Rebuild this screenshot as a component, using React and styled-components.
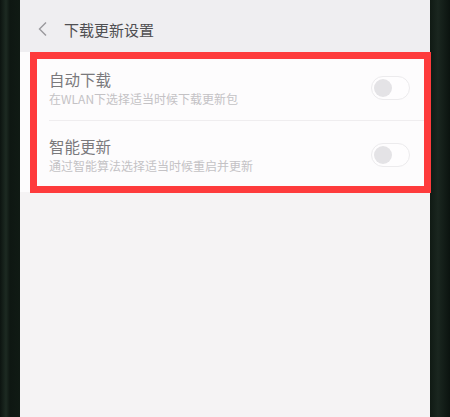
import styled, { createGlobalStyle } from "styled-components";

const Global = createGlobalStyle`
  html, body {
    margin: 0;
    padding: 0;
    background: #0f1813;
    font-family: "Noto Sans CJK SC", "Noto Sans", sans-serif;
  }
`;

const Phone = styled.div`
  width: 450px;
  height: 417px;
  display: flex;
  overflow: hidden;
  background: linear-gradient(
    90deg,
    #0c1410 0px,
    #1d2a22 6px,
    #0e1712 10px,
    #101a14 20px,
    #101a14 430px,
    #1a261f 438px,
    #0b130f 450px
  );
`;

const Screen = styled.div`
  position: relative;
  margin-left: 20px;
  width: 410px;
  height: 100%;
  background: #f5f3f4;
  display: flex;
  flex-direction: column;
`;

const Header = styled.div`
  height: 52px;
  display: flex;
  align-items: center;
  gap: 15px;
  padding-left: 17px;
  padding-top: 6px;
  box-sizing: border-box;
  background: #efeef1;
`;

const Title = styled.div`
  font-size: 15px;
  color: #4f4f52;
`;

const Card = styled.div`
  background: #fdfcfd;
  padding-left: 29px;
`;

const Row = styled.div`
  display: flex;
  align-items: center;
  padding: ${(p) => (p.$last ? "16px 20px 19px 0" : "18px 20px 14px 0")};
  border-bottom: ${(p) => (p.$last ? "none" : "1px solid #efedef")};
`;

const Texts = styled.div`
  flex: 1;
  display: flex;
  flex-direction: column;
  gap: 3px;
`;

const RowTitle = styled.div`
  font-size: 15.5px;
  line-height: 19px;
  color: #7a797c;
`;

const RowSub = styled.div`
  font-size: 12px;
  line-height: 14px;
  color: #c4c2c5;
`;

const Toggle = styled.div`
  width: 39px;
  height: 24px;
  box-sizing: border-box;
  border: 1px solid #ecebed;
  border-radius: 12px;
  background: #fefdfe;
  display: flex;
  align-items: center;
  padding-left: 2px;
`;

const Knob = styled.div`
  width: 18px;
  height: 18px;
  border-radius: 50%;
  background: #e4e3e6;
`;

const Highlight = styled.div`
  position: absolute;
  left: 10px;
  top: 52px;
  width: 401px;
  height: 141px;
  box-sizing: border-box;
  border: 7px solid #fe3b3c;
  pointer-events: none;
`;

const Back = () => (
  <svg width="12" height="16" viewBox="0 0 12 16">
    <path d="M9 1.5 L2.5 8 L9 14.5" fill="none" stroke="#9a999d" strokeWidth="1.4" />
  </svg>
);

const items = [
  { title: "自动下载", sub: "在WLAN下选择适当时候下载更新包" },
  { title: "智能更新", sub: "通过智能算法选择适当时候重启并更新" },
];

export default function App() {
  return (
    <>
      <Global />
      <Phone>
        <Screen>
          <Header>
            <Back />
            <Title>下载更新设置</Title>
          </Header>
          <Card>
            {items.map((it, i) => (
              <Row key={it.title} $last={i === items.length - 1}>
                <Texts>
                  <RowTitle>{it.title}</RowTitle>
                  <RowSub>{it.sub}</RowSub>
                </Texts>
                <Toggle>
                  <Knob />
                </Toggle>
              </Row>
            ))}
          </Card>
          <Highlight />
        </Screen>
      </Phone>
    </>
  );
}
